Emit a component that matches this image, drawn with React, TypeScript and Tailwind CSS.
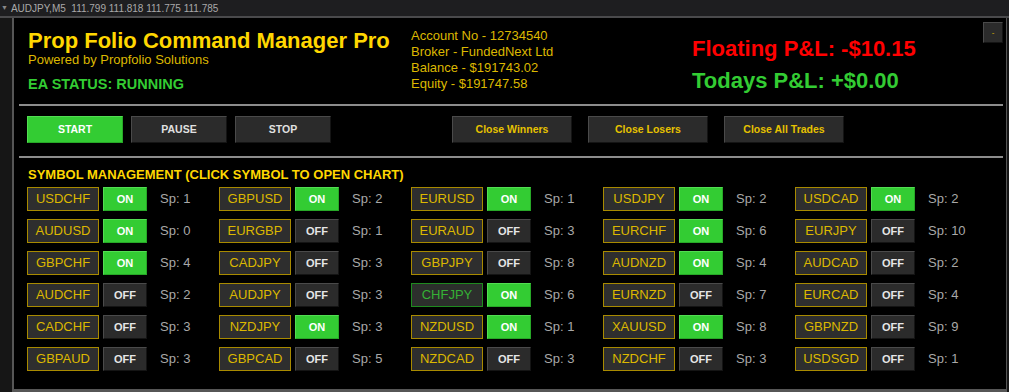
// App.tsx — Prop Folio Command Manager panel (MT5 style)
type Sym = { name: string; on: boolean; sp: number; active?: boolean };

const rows: Sym[][] = [
  [
    { name: "USDCHF", on: true, sp: 1 },
    { name: "GBPUSD", on: true, sp: 2 },
    { name: "EURUSD", on: true, sp: 1 },
    { name: "USDJPY", on: true, sp: 2 },
    { name: "USDCAD", on: true, sp: 2 },
  ],
  [
    { name: "AUDUSD", on: true, sp: 0 },
    { name: "EURGBP", on: false, sp: 1 },
    { name: "EURAUD", on: false, sp: 3 },
    { name: "EURCHF", on: true, sp: 6 },
    { name: "EURJPY", on: false, sp: 10 },
  ],
  [
    { name: "GBPCHF", on: true, sp: 4 },
    { name: "CADJPY", on: false, sp: 3 },
    { name: "GBPJPY", on: false, sp: 8 },
    { name: "AUDNZD", on: true, sp: 4 },
    { name: "AUDCAD", on: false, sp: 2 },
  ],
  [
    { name: "AUDCHF", on: false, sp: 2 },
    { name: "AUDJPY", on: false, sp: 3 },
    { name: "CHFJPY", on: true, sp: 6, active: true },
    { name: "EURNZD", on: false, sp: 7 },
    { name: "EURCAD", on: false, sp: 4 },
  ],
  [
    { name: "CADCHF", on: false, sp: 3 },
    { name: "NZDJPY", on: true, sp: 3 },
    { name: "NZDUSD", on: true, sp: 1 },
    { name: "XAUUSD", on: true, sp: 8 },
    { name: "GBPNZD", on: false, sp: 9 },
  ],
  [
    { name: "GBPAUD", on: false, sp: 3 },
    { name: "GBPCAD", on: false, sp: 5 },
    { name: "NZDCAD", on: false, sp: 3 },
    { name: "NZDCHF", on: false, sp: 3 },
    { name: "USDSGD", on: false, sp: 1 },
  ],
];

const darkBtn =
  "bg-[#2b2b2b] border border-t-[#4a4a4a] border-l-[#4a4a4a] border-b-[#141414] border-r-[#141414]";

function SymbolCell({ s }: { s: Sym }) {
  return (
    <div className="flex items-center h-[24px]">
      <div
        className={
          s.active
            ? "w-[72px] h-[24px] flex items-center justify-center border border-[#1f8a1f] bg-[#2c2f2c] text-[#35b035] text-[13px]"
            : "w-[72px] h-[24px] flex items-center justify-center border border-[#a88a00] bg-[#2e2e2e] text-[#dcb800] text-[13px]"
        }
      >
        {s.name}
      </div>
      <div
        className={
          s.on
            ? "ml-[4px] w-[44px] h-[24px] flex items-center justify-center bg-[#33cc33] border border-t-[#52dd52] border-l-[#52dd52] border-b-[#27a827] border-r-[#27a827] text-white text-[11px] font-bold"
            : `ml-[4px] w-[44px] h-[24px] flex items-center justify-center ${darkBtn} text-[#e6e6e6] text-[11px] font-bold`
        }
      >
        {s.on ? "ON" : "OFF"}
      </div>
      <span className="ml-[13px] text-[13px] text-[#a8a8a8]">Sp: {s.sp}</span>
    </div>
  );
}

export default function App() {
  return (
    <div className="w-[1009px] h-[392px] bg-[#161616] flex flex-col font-['Liberation_Sans',Arial,sans-serif] overflow-hidden">
      {/* chart title bar */}
      <div className="h-[16px] bg-[#1e1e20] flex items-center text-[10px] text-[#a9a9a9] whitespace-pre">
        <span className="ml-[1px] mr-[3px] text-[7px] text-[#888]">▼</span>
        <span>AUDJPY,M5  111.799 111.818 111.775 111.785</span>
      </div>
      <div className="h-[2px] bg-[#4a4a4c]" />

      <div className="flex-1 flex">
        <div className="w-[12px]" />
        <div className="w-[995px] border-l-2 border-r border-b-[3px] border-[#565656] bg-black flex flex-col">
          {/* header */}
          <div className="h-[86px] flex">
            <div className="ml-[14px] w-[383px] pt-[11px] flex flex-col">
              <div className="text-[22px] leading-[24px] font-bold text-[#ffd700] whitespace-nowrap">
                Prop Folio Command Manager Pro
              </div>
              <div className="text-[13px] leading-[14px] text-[#dcb800]">
                Powered by Propfolio Solutions
              </div>
              <div className="mt-[9px] text-[14.5px] leading-[16px] font-bold text-[#33cc33]">
                EA STATUS: RUNNING
              </div>
            </div>
            <div className="w-[281px] pt-[10px] text-[13px] leading-[16px] text-[#dcb800]">
              <div>Account No - 12734540</div>
              <div>Broker - FundedNext Ltd</div>
              <div>Balance - $191743.02</div>
              <div>Equity - $191747.58</div>
            </div>
            <div className="pt-[15px] text-[22px] leading-[32px] font-bold whitespace-nowrap">
              <div className="text-[#ff0000]">Floating P&amp;L: -$10.15</div>
              <div className="text-[#33cc33]">Todays P&amp;L: +$0.00</div>
            </div>
            <div className="ml-auto mr-[3px] mt-[4px]">
              <div className={`w-[20px] h-[21px] flex items-center justify-center ${darkBtn} text-[#dcb800] text-[8px] leading-none`}>
                -
              </div>
            </div>
          </div>

          <div className="ml-[5px] mr-[3px] h-[2px] bg-[#8c8c8c]" />

          {/* control buttons */}
          <div className="mt-[10px] ml-[13px] h-[27px] flex text-[10.5px] font-bold">
            <div className="w-[96px] flex items-center justify-center bg-[#33cc33] border border-t-[#52dd52] border-l-[#52dd52] border-b-[#27a827] border-r-[#27a827] text-white">
              START
            </div>
            <div className={`ml-[8px] w-[96px] flex items-center justify-center ${darkBtn} text-[#e0e0e0]`}>
              PAUSE
            </div>
            <div className={`ml-[8px] w-[96px] flex items-center justify-center ${darkBtn} text-[#e0e0e0]`}>
              STOP
            </div>
            <div className={`ml-[121px] w-[120px] flex items-center justify-center ${darkBtn} text-[#e6c200]`}>
              Close Winners
            </div>
            <div className={`ml-[16px] w-[120px] flex items-center justify-center ${darkBtn} text-[#e6c200]`}>
              Close Losers
            </div>
            <div className={`ml-[16px] w-[120px] flex items-center justify-center ${darkBtn} text-[#e6c200]`}>
              Close All Trades
            </div>
          </div>

          <div className="mt-[13px] ml-[5px] mr-[3px] h-[2px] bg-[#8c8c8c]" />

          {/* symbols */}
          <div className="mt-[9px] ml-[14px] text-[13px] leading-[16px] font-bold text-[#ffd700]">
            SYMBOL MANAGEMENT (CLICK SYMBOL TO OPEN CHART)
          </div>
          <div className="mt-[4px] ml-[13px] grid grid-cols-[repeat(5,192px)] gap-y-[8px]">
            {rows.flat().map((s) => (
              <SymbolCell key={s.name} s={s} />
            ))}
          </div>
        </div>
      </div>
    </div>
  );
}
